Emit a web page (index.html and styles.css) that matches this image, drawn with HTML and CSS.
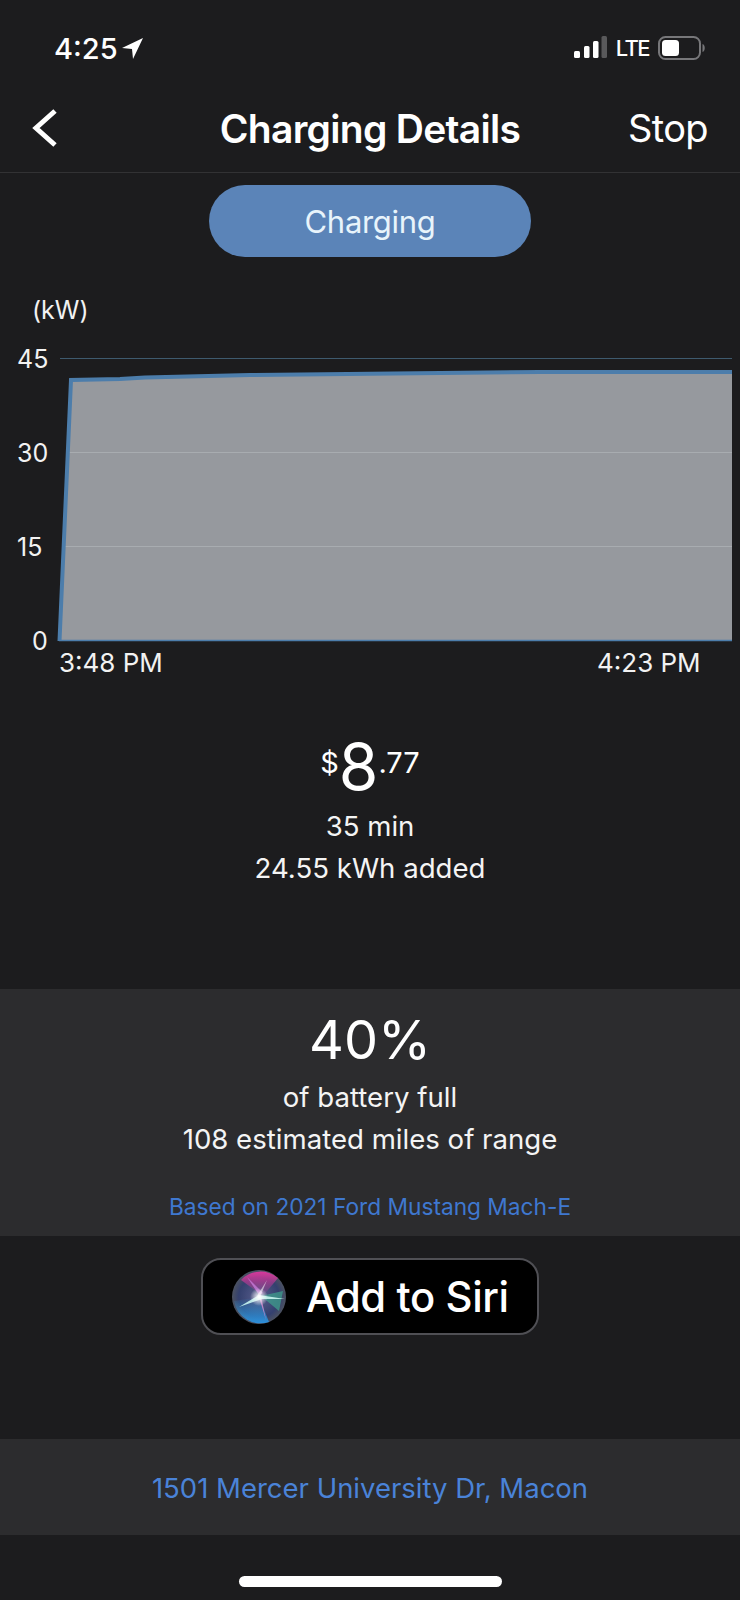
FILE: index.html
```html
<!DOCTYPE html>
<html lang="en">
<head>
<meta charset="utf-8">
<title>Charging Details</title>
<link rel="stylesheet" href="styles.css">
</head>
<body>
<div class="screen">
  <div class="status">
    <div class="status-left">
      <span class="clock">4:25</span>
      <svg class="loc" width="24" height="24" viewBox="0 0 24 24"><path d="M23 2 L2 12 L12 13 L13 23 Z" fill="#fff"/></svg>
    </div>
    <div class="status-right">
      <svg width="33" height="24" viewBox="0 0 33 24"><rect x="0" y="15" width="6" height="7" rx="1.500" fill="#fff"/><rect x="10" y="10" width="5.500" height="12" rx="1.500" fill="#fff"/><rect x="19" y="5" width="5.500" height="17" rx="1.500" fill="#fff"/><rect x="27.500" y="0" width="5.500" height="22" rx="1.500" fill="#59595b"/></svg>
      <span class="lte">LTE</span>
      <svg width="48" height="24" viewBox="0 0 48 24"><rect x="1" y="1" width="41" height="22" rx="6.500" fill="none" stroke="#77777a" stroke-width="2"/><rect x="4" y="4" width="17" height="16" rx="3.500" fill="#fff"/><path d="M44.500 8 C47.500 9 47.500 15 44.500 16 Z" fill="#77777a"/></svg>
    </div>
  </div>
  <header class="nav">
    <svg class="back" width="28" height="40" viewBox="0 0 28 40"><path d="M25 3 L6 20 L25 37" fill="none" stroke="#fff" stroke-width="5"/></svg>
    <h1 class="title">Charging Details</h1>
    <span class="stop">Stop</span>
  </header>
  <div class="pill-row"><div class="pill">Charging</div></div>
  <svg class="chart" width="740" height="390" viewBox="0 0 740 390">
    <text class="axis" x="32" y="26">(kW)</text>
    <text class="axis" x="17" y="75">45</text>
    <text class="axis" x="17" y="169">30</text>
    <text class="axis" x="17" y="263">15</text>
    <text class="axis" x="32" y="357">0</text>
    <path d="M60 65.500 H732" stroke="#3e5a6e" stroke-width="1.200"/>
    <path d="M60 348 L71 87 L120 86 L145 84.500 L250 82 L540 79 L732 79 V348 Z" fill="#96999e"/>
    <path d="M68 159.500 H732 M64 253.500 H732" stroke="#a8acb0" stroke-width="1"/>
    <path d="M59.500 348 L71 87 L120 86 L145 84.500 L250 82 L540 79 L732 79" fill="none" stroke="#4c7dab" stroke-width="4"/>
    <path d="M59 347.500 H732" stroke="#4c7dab" stroke-width="1.500"/>
    <text class="axis time" x="59" y="379">3:48 PM</text>
    <text class="axis time" x="597" y="379">4:23 PM</text>
  </svg>
  <section class="cost">
    <div class="price"><span class="price-small">$</span><span class="price-big">8</span><span class="price-small">.77</span></div>
    <div class="line">35 min</div>
    <div class="line">24.55 kWh added</div>
  </section>
  <section class="band battery">
    <div class="percent">40%</div>
    <div class="line">of battery full</div>
    <div class="line">108 estimated miles of range</div>
    <div class="based">Based on 2021 Ford Mustang Mach-E</div>
  </section>
  <div class="siri-row">
    <div class="siri">
      <svg width="56" height="56" viewBox="0 0 56 56">
        <defs>
          <radialGradient id="orb" cx="50%" cy="50%" r="50%"><stop offset="0" stop-color="#5a5f8e"/><stop offset="0.75" stop-color="#34406e"/><stop offset="1" stop-color="#4c5260"/></radialGradient>
          <linearGradient id="top" x1="0" y1="0" x2="0" y2="1"><stop offset="0" stop-color="#d6389c"/><stop offset="1" stop-color="#d6389c" stop-opacity="0"/></linearGradient>
          <linearGradient id="low" x1="0" y1="0" x2="0" y2="1"><stop offset="0" stop-color="#2f9fe0" stop-opacity="0"/><stop offset="1" stop-color="#2b8fdc"/></linearGradient>
          <radialGradient id="glow"><stop offset="0" stop-color="#fff"/><stop offset="1" stop-color="#fff" stop-opacity="0"/></radialGradient>
        </defs>
        <circle cx="28" cy="28" r="27" fill="url(#orb)"/>
        <path d="M10 11 A27 27 0 0 1 47 9 L32 27 Z" fill="url(#top)"/>
        <path d="M3 32 L28 28 L38 53 A27 27 0 0 1 3 32 Z" fill="url(#low)"/>
        <path d="M52 22 L30 27 L48 42 Z" fill="#3f9e8c" opacity="0.75"/>
        <path d="M28 26 L16 8 L32 24 Z" fill="#c77ad8" opacity="0.8"/>
        <path d="M27 25 L35 51 L30 27 Z" fill="#d98bd0" opacity="0.8"/>
        <path d="M8 38 L28 26 L54 30 L31 30 Z" fill="#c8f5f0" opacity="0.9"/>
        <path d="M36 11 L29 28 L26 27 Z" fill="#fff" opacity="0.55"/>
        <circle cx="28" cy="28" r="9" fill="url(#glow)"/>
      </svg>
      <span class="siri-label">Add to Siri</span>
    </div>
  </div>
  <section class="band address">1501 Mercer University Dr, Macon</section>
  <div class="home-row"><div class="home"></div></div>
</div>
</body>
</html>
```
FILE: styles.css
```css
* { box-sizing: border-box; }
html, body { margin: 0; padding: 0; background: #1c1c1e; }
body { font-family: Inter, "Liberation Sans", sans-serif; color: #fff; }
.screen { width: 740px; height: 1600px; overflow: hidden; display: flex; flex-direction: column; background: #1c1c1e; }
.status { height: 92px; padding: 30px 34px 0 54px; display: flex; justify-content: space-between; align-items: flex-start; }
.status-left { display: flex; align-items: center; gap: 2px; height: 36px; }
.clock { font-size: 29px; font-weight: 500; }
.status-right { display: flex; align-items: center; gap: 9px; height: 36px; }
.lte { font-size: 22px; font-weight: 500; letter-spacing: -1.600px; }
.nav { height: 81px; position: relative; display: flex; justify-content: space-between; align-items: center; padding: 0 32px 8px 30px; border-bottom: 1px solid #323234; }
.title { position: absolute; left: 0; right: 0; top: 0; line-height: 73px; text-align: center; margin: 0; font-size: 39px; font-weight: 600; letter-spacing: -0.700px; }
.stop { font-size: 38px; font-weight: 400; letter-spacing: -0.600px; }
.pill-row { display: flex; justify-content: center; padding-top: 12px; }
.pill { width: 322px; height: 72px; border-radius: 36px; background: #5b84b8; display: flex; align-items: center; justify-content: center; font-size: 31px; letter-spacing: -0.300px; color: #e8f4fb; }
.chart { display: block; margin-top: 36px; flex: none; }
.axis { font-family: Inter, "Liberation Sans", sans-serif; font-size: 25px; fill: #f2f2f2; }
.time { font-size: 26px; }
.cost { display: flex; flex-direction: column; align-items: center; margin-top: 50px; height: 256px; }
.price { height: 72px; display: flex; align-items: flex-start; }
.price-big { font-size: 64px; line-height: 68px; }
.price-small { font-size: 29px; line-height: 60px; }
.line { font-size: 27.600px; line-height: 42px; color: #f4f4f4; }
.band { background: #2c2c2e; display: flex; flex-direction: column; align-items: center; }
.battery { height: 247px; padding-top: 18px; }
.percent { font-size: 54px; line-height: 66px; margin-bottom: 3px; }
.based { font-size: 22.700px; line-height: 30px; color: #3f78d0; margin-top: 32px; }
.siri-row { height: 203px; padding-top: 22px; display: flex; justify-content: center; align-items: flex-start; }
.siri { width: 338px; height: 77px; background: #000; border: 2px solid #4f4f54; border-radius: 20px; display: flex; align-items: center; padding-left: 28px; gap: 19px; }
.siri-label { font-size: 41.800px; font-weight: 500; letter-spacing: -0.400px; }
.address { height: 96px; justify-content: center; font-size: 27.500px; padding-top: 2px; color: #4a83d8; }
.home-row { padding-top: 41px; display: flex; justify-content: center; }
.home { width: 263px; height: 11px; border-radius: 6px; background: #fff; }
```
